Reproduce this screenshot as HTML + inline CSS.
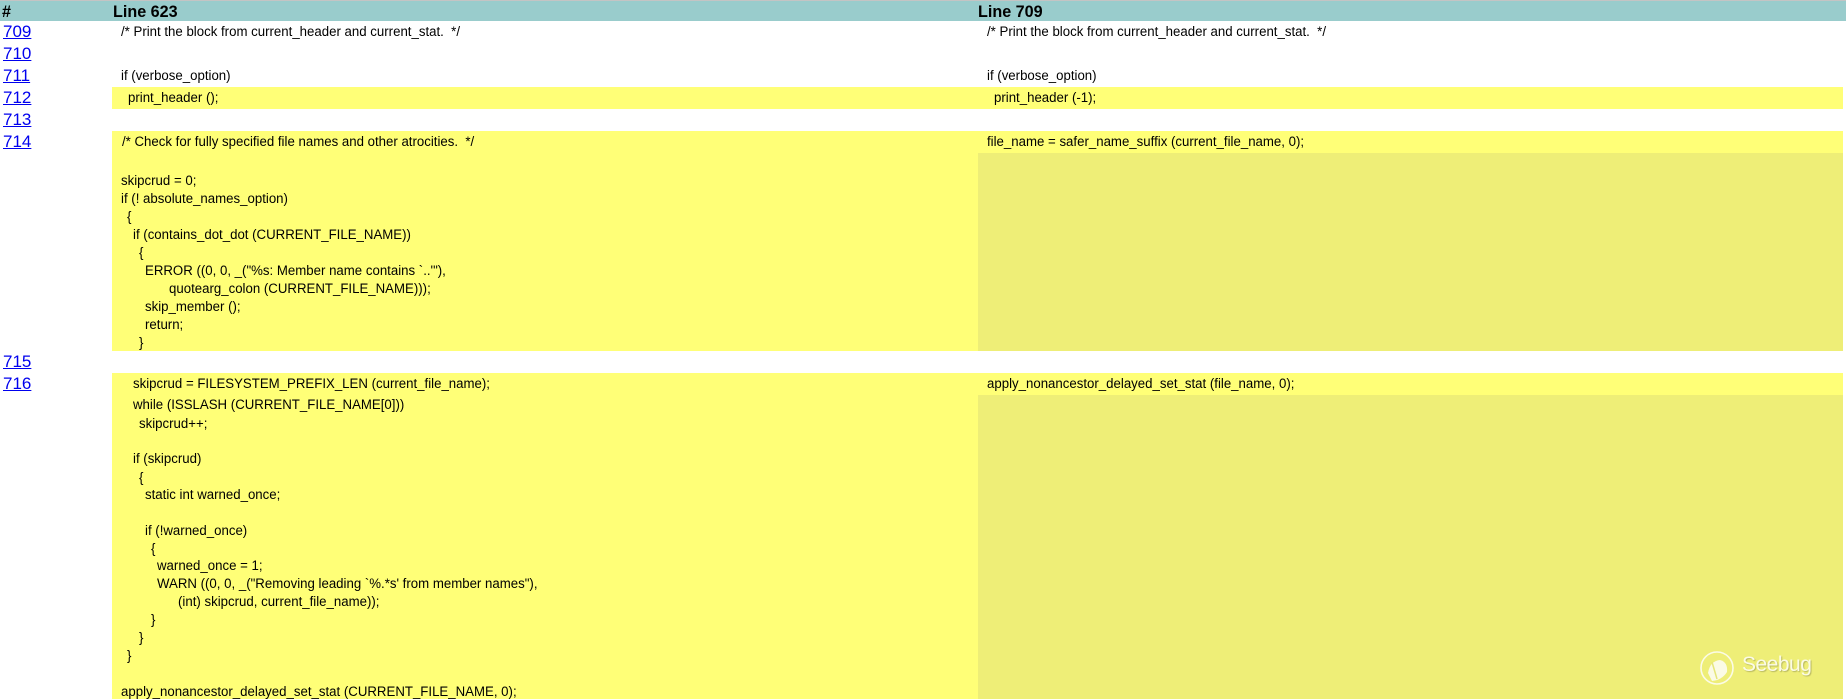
<!DOCTYPE html>
<html><head><meta charset="utf-8"><style>
html,body{margin:0;padding:0;background:#fff;width:1846px;height:699px;overflow:hidden;position:relative;font-family:"Liberation Sans",Arial,sans-serif;}
.a{position:absolute}
.hd{position:absolute;left:0;top:0;width:1846px;height:21px;background:#99cccc;border-top:1px solid #c4c4c4;box-sizing:border-box}
.hd span{position:absolute;top:0;font-weight:bold;font-size:17px;line-height:21px;color:#000;transform:scaleX(0.95);transform-origin:0 50%}
.ln{position:absolute;left:3px;font-size:17px;line-height:22px;height:22px;color:#0000ee;text-decoration:underline}
.t{position:absolute;font-size:13.5px;color:#000;white-space:pre;transform:scaleX(0.98);transform-origin:0 50%;height:22px;line-height:22px}
.p{position:absolute;font-size:13.5px;color:#000;white-space:pre;transform:scaleX(0.98);transform-origin:0 50%;height:18px;line-height:18px}
.y{position:absolute;background:#ffff77}
.d{position:absolute;background:#eeee77}
</style></head><body>
<div class="hd"><span style="left:2px">#</span><span style="left:113px">Line 623</span><span style="left:978px">Line 709</span></div>

<div class="ln" style="top:21px">709</div>
<div class="ln" style="top:43px">710</div>
<div class="ln" style="top:65px">711</div>
<div class="ln" style="top:87px">712</div>
<div class="ln" style="top:109px">713</div>
<div class="ln" style="top:131px">714</div>
<div class="ln" style="top:351px">715</div>
<div class="ln" style="top:373px">716</div>

<div class="t" style="top:21px;left:121px">/* Print the block from current_header and current_stat.  */</div>
<div class="t" style="top:21px;left:987px">/* Print the block from current_header and current_stat.  */</div>
<div class="t" style="top:65px;left:121px">if (verbose_option)</div>
<div class="t" style="top:65px;left:987px">if (verbose_option)</div>

<div class="y" style="top:87px;left:112px;width:1731px;height:22px"></div>
<div class="t" style="top:87px;left:128px">print_header ();</div>
<div class="t" style="top:87px;left:994px">print_header (-1);</div>

<div class="y" style="top:131px;left:112px;width:1731px;height:22px"></div>
<div class="y" style="top:153px;left:112px;width:866px;height:198px"></div>
<div class="d" style="top:153px;left:978px;width:865px;height:198px"></div>
<div class="t" style="top:131px;left:122px">/* Check for fully specified file names and other atrocities.  */</div>
<div class="t" style="top:131px;left:987px">file_name = safer_name_suffix (current_file_name, 0);</div>
<div class="p" style="top:172px;left:121px">skipcrud = 0;</div>
<div class="p" style="top:190px;left:121px">if (! absolute_names_option)</div>
<div class="p" style="top:208px;left:127px">{</div>
<div class="p" style="top:226px;left:133px">if (contains_dot_dot (CURRENT_FILE_NAME))</div>
<div class="p" style="top:244px;left:139px">{</div>
<div class="p" style="top:262px;left:145px">ERROR ((0, 0, _("%s: Member name contains `..'"),</div>
<div class="p" style="top:280px;left:169px">quotearg_colon (CURRENT_FILE_NAME)));</div>
<div class="p" style="top:298px;left:145px">skip_member ();</div>
<div class="p" style="top:316px;left:145px">return;</div>
<div class="p" style="top:334px;left:139px">}</div>

<div class="y" style="top:373px;left:112px;width:1731px;height:22px"></div>
<div class="y" style="top:395px;left:112px;width:866px;height:304px"></div>
<div class="d" style="top:395px;left:978px;width:865px;height:304px"></div>
<div class="t" style="top:373px;left:133px">skipcrud = FILESYSTEM_PREFIX_LEN (current_file_name);</div>
<div class="t" style="top:373px;left:987px">apply_nonancestor_delayed_set_stat (file_name, 0);</div>
<div class="p" style="top:396px;left:133px">while (ISSLASH (CURRENT_FILE_NAME[0]))</div>
<div class="p" style="top:415px;left:139px">skipcrud++;</div>
<div class="p" style="top:450px;left:133px">if (skipcrud)</div>
<div class="p" style="top:469px;left:139px">{</div>
<div class="p" style="top:486px;left:145px">static int warned_once;</div>
<div class="p" style="top:522px;left:145px">if (!warned_once)</div>
<div class="p" style="top:540px;left:151px">{</div>
<div class="p" style="top:557px;left:157px">warned_once = 1;</div>
<div class="p" style="top:575px;left:157px">WARN ((0, 0, _("Removing leading `%.*s' from member names"),</div>
<div class="p" style="top:593px;left:178px">(int) skipcrud, current_file_name));</div>
<div class="p" style="top:611px;left:151px">}</div>
<div class="p" style="top:629px;left:139px">}</div>
<div class="p" style="top:647px;left:127px">}</div>
<div class="p" style="top:683px;left:121px">apply_nonancestor_delayed_set_stat (CURRENT_FILE_NAME, 0);</div>

<svg class="a" style="left:1698px;top:648px" width="40" height="42" viewBox="0 0 40 42">
<circle cx="19" cy="20" r="16" fill="none" stroke="#fbfbe6" stroke-width="1.6"/>
<path d="M10 25 Q12 13 22 12 Q30 14 29 24 Q24 32 14 33 Z" fill="#fbfbe6"/>
<path d="M14 14 L19 31" stroke="#e6e67a" stroke-width="1.5"/>
</svg>
<div class="a" style="left:1742px;top:653px;font-size:21px;color:#fbfbe6;text-shadow:1px 1px 1px #b8b860;letter-spacing:-0.5px">Seebug</div>
</body></html>
